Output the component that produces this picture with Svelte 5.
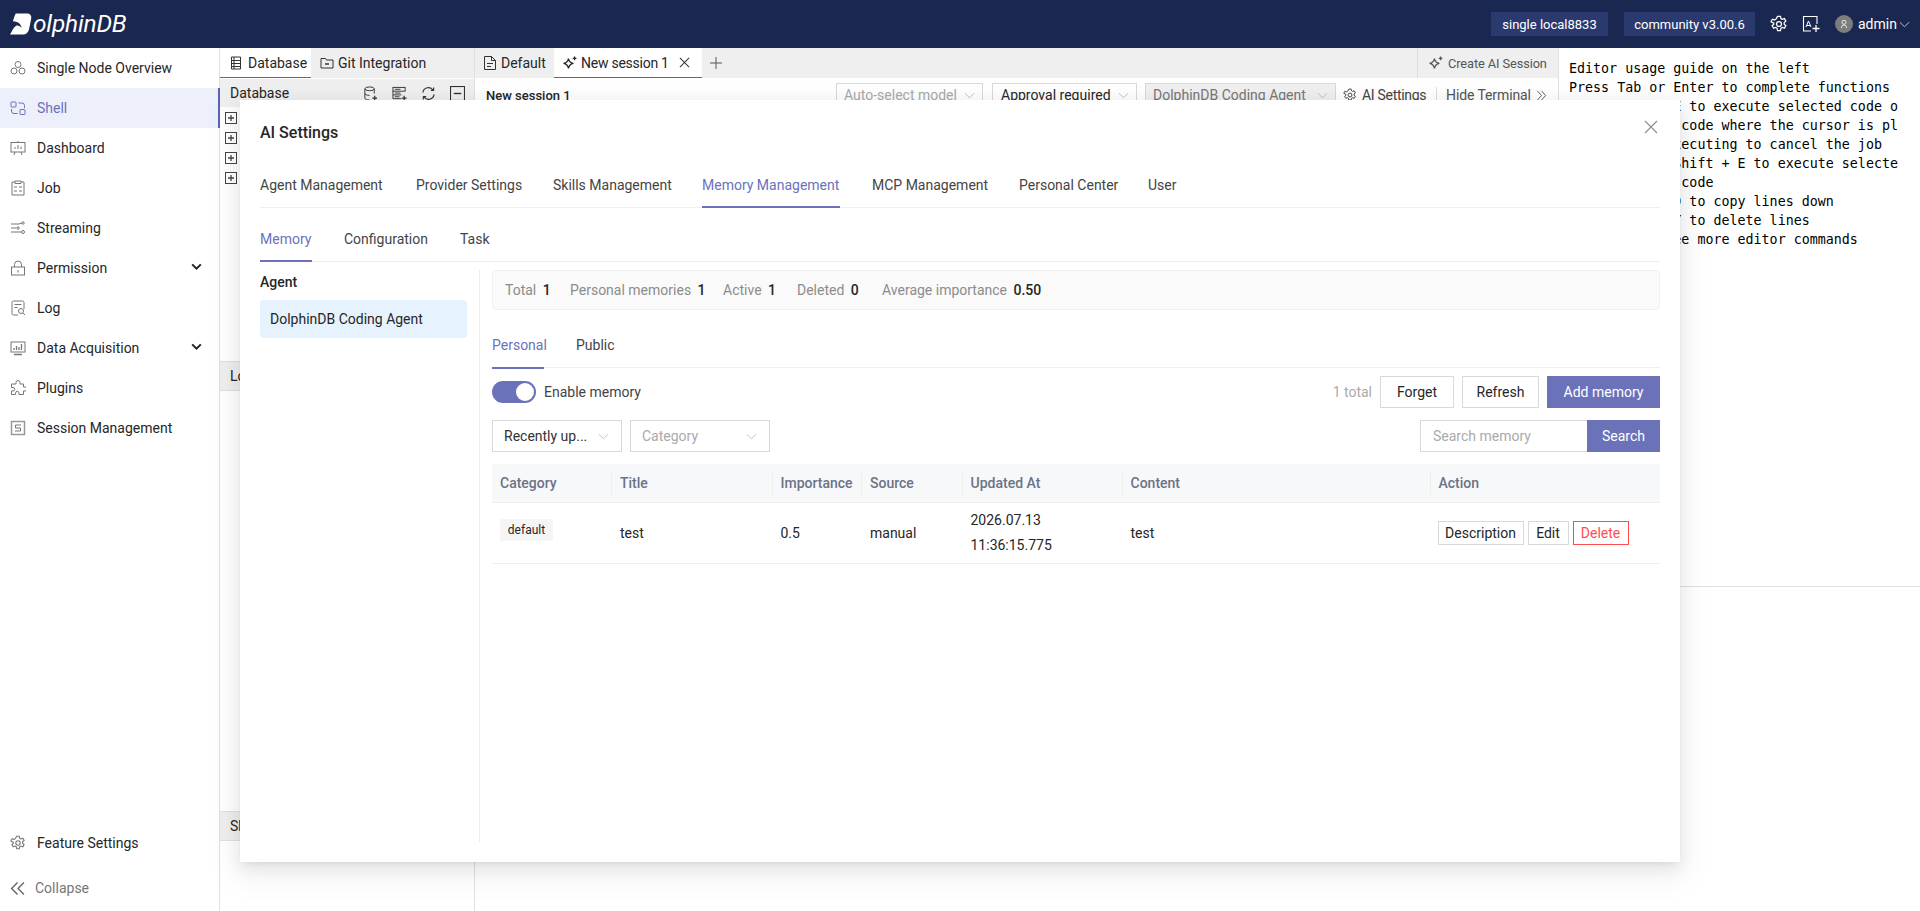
<script>
  const nav = [
    { t: 'Single Node Overview', i: 'overview' },
    { t: 'Shell', i: 'shell', active: true },
    { t: 'Dashboard', i: 'dash' },
    { t: 'Job', i: 'job' },
    { t: 'Streaming', i: 'stream' },
    { t: 'Permission', i: 'lock', caret: true },
    { t: 'Log', i: 'log' },
    { t: 'Data Acquisition', i: 'data', caret: true },
    { t: 'Plugins', i: 'plug' },
    { t: 'Session Management', i: 'sess' }
  ];
  const topTabs = [
    { t: 'Agent Management', w: 124 },
    { t: 'Provider Settings', w: 105 },
    { t: 'Skills Management', w: 117 },
    { t: 'Memory Management', w: 138 },
    { t: 'MCP Management', w: 115 },
    { t: 'Personal Center', w: 97 },
    { t: 'User', w: 28 }
  ];
  const subTabs = [
    { t: 'Memory', w: 52 },
    { t: 'Configuration', w: 84 },
    { t: 'Task', w: 26 }
  ];
  const scopeTabs = [
    { t: 'Personal', w: 52 },
    { t: 'Public', w: 37 }
  ];
  const stats = [
    { t: 'Total', v: '1', w: 65 },
    { t: 'Personal memories', v: '1', w: 153 },
    { t: 'Active', v: '1', w: 74 },
    { t: 'Deleted', v: '0', w: 85 },
    { t: 'Average importance', v: '0.50', w: 170 }
  ];
  const guide = [
    'Editor usage guide on the left',
    'Press Tab or Enter to complete functions',
    'Press Ctrl + E to execute selected code o',
    'r the line of code where the cursor is pl',
    'Press F2 if executing to cancel the job',
    'Press Ctrl + Shift + E to execute selecte',
    'd or the full code',
    'Press Ctrl + D to copy lines down',
    'Press Ctrl + Y to delete lines',
    'Press F1 to see more editor commands'
  ];
  const cols = ['Category', 'Title', 'Importance', 'Source', 'Updated At', 'Content', 'Action'];
</script>

{#snippet chev(cls)}
  <svg class={cls} viewBox="0 0 12 12"><path d="M1 3.500 6 8.500 11 3.500" fill="none" stroke="currentColor" stroke-width="1"/></svg>
{/snippet}

{#snippet gear(cls)}
  <svg class={cls} viewBox="0 0 16 16" fill="none" stroke="currentColor" stroke-width="1.100"><path d="M6.700 1.200h2.600l.4 2 1.200.7 1.900-.7 1.300 2.300-1.500 1.300v1.400l1.500 1.300-1.300 2.300-1.900-.7-1.200.7-.4 2H6.700l-.4-2-1.200-.7-1.900.7-1.300-2.300 1.500-1.300V7.300L.9 6l1.300-2.300 1.900.7 1.200-.7z"/><circle cx="8" cy="8" r="2.200"/></svg>
{/snippet}

{#snippet spark(cls)}
  <svg class={cls} viewBox="1.500 .5 11.500 11.500" fill="none" stroke="currentColor" stroke-width="1.100"><path d="M6 2.600c.5 2.500 1.400 3.500 4 4-2.600.6-3.500 1.500-4 4-.5-2.500-1.400-3.400-4-4 2.600-.5 3.500-1.500 4-4z"/><path d="M11 1v3M9.500 2.500h3" stroke-width="1.100"/></svg>
{/snippet}

{#snippet navIcon(n)}
  <svg class="nav-ico" viewBox="0 0 16 16" fill="none" stroke="currentColor" stroke-width="1">
    {#if n === 'overview'}
      <circle cx="8" cy="4.500" r="3"/><circle cx="4" cy="11" r="3"/><circle cx="12" cy="11" r="3"/>
    {:else if n === 'shell'}
      <rect x="1" y="2" width="5" height="5" rx=".5"/><rect x="10" y="9.500" width="5" height="5" rx=".5"/><path d="M8.500 3h3.500a2.500 2.500 0 0 1 2.500 2.500V8M7.500 13.500H4A2.500 2.500 0 0 1 1.500 11V9"/>
    {:else if n === 'dash'}
      <rect x="1" y="2.500" width="14" height="9.500"/><path d="M8 1v1.500M5 9V7M8 9V5M11 9V6.500M5 12l-1 3M11 12l1 3"/>
    {:else if n === 'job'}
      <path d="M5 2H2v13h12V2h-3M5 1h6v2.500H5zM4 7h3M4 11h3M9 7h3M9 11h3"/>
    {:else if n === 'stream'}
      <path d="M1 4h8M1 8h5M1 12h10M9 4l3-1"/><circle cx="13" cy="3" r="1.200"/><circle cx="8" cy="8" r="1.200"/><circle cx="13" cy="12" r="1.500"/>
    {:else if n === 'lock'}
      <rect x="1.500" y="7" width="13" height="8"/><path d="M4.500 7V4.500a3.500 3.500 0 0 1 7 0V7M8 10v2.500"/>
    {:else if n === 'log'}
      <path d="M14 9V2.500A1.500 1.500 0 0 0 12.500 1h-9A1.500 1.500 0 0 0 2 2.500v11A1.500 1.500 0 0 0 3.500 15H8M4.500 4.500h7M4.500 7.500h3"/><circle cx="11" cy="11" r="2.500"/><path d="M13 13l2 2"/>
    {:else if n === 'data'}
      <rect x="1" y="2" width="14" height="10"/><path d="M4 10V8M6.500 10V6M9 10V7M11.500 10V4M4 14.500h8" stroke-width="1.300"/>
    {:else if n === 'plug'}
      <path d="M6 2.500a2 2 0 0 1 4 0V4h3.500v3H15a2 2 0 0 1 0 4h-1.500v3.500H9V13a1.700 1.700 0 0 0-3.400 0v1.500H1.500V11H3a1.700 1.700 0 0 0 0-3.500H1.500V4H6z"/>
    {:else if n === 'sess'}
      <rect x="1.500" y="1.500" width="13" height="13" stroke="#999" stroke-width="1.500"/><path d="M11 5H5.500v3h5v3H5"/>
    {/if}
  </svg>
{/snippet}

{#snippet tree()}
  <svg class="tree" viewBox="0 0 12 12" fill="none" stroke="#444"><rect x=".5" y=".5" width="11" height="11"/><path d="M3 6h6M6 3v6" stroke-width="1.300"/></svg>
{/snippet}

<div class="app">
  <header class="top">
    <div class="logo">
      <svg class="logo-d" viewBox="0 0 24 24"><path d="M6 1h11c4 0 6 2 5 6l-2 10c-1 4-3 6-7 6H0c2-3 3-7 6-9 2-1 4 0 6 2 0-3-3-7-9-7 1-3 2-6 3-8z" fill="#fff"/></svg>
      <span class="logo-t">olphinDB</span>
    </div>
    <div class="top-right">
      <span class="chip c1">single local8833</span>
      <span class="chip c2">community v3.00.6</span>
      {@render gear('top-gear')}
      <svg class="top-ai" viewBox="0 0 18 18" fill="none" stroke="#fff" stroke-width="1.100"><path d="M9 16H1.500V1.500H15V9"/><path d="M4 12l2.500-6L9 12M5 10.500h3" stroke-width="1"/><path d="M10.500 13.500h7M14 10v7" stroke-width="1.300"/></svg>
      <span class="avatar">
        <svg viewBox="0 0 10 10" fill="none" stroke="#fff" stroke-width=".8"><circle cx="5" cy="3.300" r="2"/><path d="M2.500 9c0-2 1-3 2.500-3s2.500 1 2.500 3"/></svg>
      </span>
      <span class="uname">admin</span>
      {@render chev('uchev')}
    </div>
  </header>

  <div class="body">
    <aside class="side">
      <nav class="nav">
        {#each nav as n}
          <div class="nav-item" class:active={n.active}>
            {@render navIcon(n.i)}
            <span>{n.t}</span>
            {#if n.caret}
              <svg class="caret" viewBox="0 0 12 12"><path d="M2 4l4 4 4-4" fill="none" stroke="#222" stroke-width="1.800"/></svg>
            {/if}
          </div>
        {/each}
      </nav>
      <div class="side-foot">
        <div class="nav-item">
          {@render gear('nav-ico')}
          <span>Feature Settings</span>
        </div>
        <div class="collapse">
          <svg viewBox="0 0 14 14" fill="none" stroke="#666" stroke-width="1.300"><path d="M7 1.500 1.500 7 7 12.500M13 1.500 7.500 7 13 12.500"/></svg>
          <span>Collapse</span>
        </div>
      </div>
    </aside>

    <section class="dbcol">
      <div class="tabs-bar">
        <div class="dtab on">
          <svg viewBox="0 0 14 14" fill="none" stroke="#333"><path d="M2.500 1h9v12h-9zM2.500 4.500h9M2.500 7.500h9M2.500 10.500h9M5 1v12"/></svg>
          Database
        </div>
        <div class="dtab">
          <svg viewBox="0 0 14 14" fill="none" stroke="#333"><path d="M1 2.500h4.500l1 1.500H13v8H1z"/><path d="M5 8h4" stroke-width="1.500"/></svg>
          Git Integration
        </div>
      </div>
      <div class="db-head">
        <span>Database</span>
        <div class="db-tools">
          <svg viewBox="0 0 16 16" fill="none" stroke="#333"><ellipse cx="7" cy="3" rx="5" ry="2"/><path d="M2 3v10c0 1 2 2 5 2M12 3v5M2 8c0 1 2 2 5 2"/><path d="M10 13h5M12.500 10.500v5" stroke-width="1.300"/></svg>
          <svg viewBox="0 0 16 16" fill="none" stroke="#333"><rect x="1" y="1.500" width="13" height="4"/><path d="M1 5.500v4h9M1 9.500v4h9M3 3.500h6M3 7.500h6M3 11.500h5"/><path d="M10.500 13h5M13 10.500v5" stroke-width="1.300"/></svg>
          <svg viewBox="0 0 16 16" fill="none" stroke="#333" stroke-width="1.200"><path d="M2 7a6 6 0 0 1 11-2.500M14 9a6 6 0 0 1-11 2.500"/><path d="M13.500 1.500v3.200h-3M2.500 14.500v-3.200h3"/></svg>
          <svg viewBox="0 0 14 14" fill="none" stroke="#333"><rect x=".5" y=".5" width="13" height="13"/><path d="M3.500 7h7" stroke-width="1.300"/></svg>
        </div>
      </div>
      <div class="db-tree">
        {#each [0, 1, 2, 3] as k}<div class="tree-row">{@render tree()}</div>{/each}
      </div>
      <div class="pane-title">Local</div>
      <div class="pane-fill"></div>
      <div class="pane-title">Shared</div>
      <div class="pane-end"></div>
    </section>

    <section class="editor">
      <div class="ed-tabs">
        <div class="etab def">
          <svg viewBox="0 0 12 14" fill="none" stroke="#333"><path d="M.5.500h7l4 4v9H.500zM7.500.5v4h4M3 7.500h6M3 10.500h4"/></svg>
          Default
        </div>
        <div class="etab on">
          {@render spark('sp')}
          <span class="etab-t">New session 1</span>
          <svg class="ex" viewBox="0 0 12 12" fill="none" stroke="#333" stroke-width="1.100"><path d="M1 1l10 10M11 1 1 11"/></svg>
        </div>
        <svg class="plus" viewBox="0 0 12 12" fill="none" stroke="#555"><path d="M0 6h12M6 0v12"/></svg>
        <div class="create">
          {@render spark('sp')}
          Create AI Session
        </div>
      </div>
      <div class="ed-tools">
        <strong class="sess-name">New session 1</strong>
        <div class="ed-right">
          <span class="sel dim">Auto-select model{@render chev('schev')}</span>
          <span class="sel appr">Approval required{@render chev('schev')}</span>
          <span class="sel gray">DolphinDB Coding Agent{@render chev('schev')}</span>
          <span class="ai-set">{@render gear('agear')}AI Settings</span>
          <span class="hide-t">Hide Terminal
            <svg viewBox="0 0 12 12" fill="none" stroke="#555"><path d="M1.500 1 6 6l-4.500 5M6 1l4.500 5L6 11"/></svg>
          </span>
        </div>
      </div>
    </section>

    <section class="guide">
      <pre>{guide.join('\n')}</pre>
    </section>
  </div>

  <div class="modal">
    <div class="m-head">
      <h2>AI Settings</h2>
      <svg class="m-close" viewBox="0 0 14 14" fill="none" stroke="#8c8c8c" stroke-width="1.100"><path d="M1 1l12 12M13 1 1 13"/></svg>
    </div>
    <div class="tabs main-tabs">
      {#each topTabs as t}
        <div class="tab" class:on={t.t === 'Memory Management'} style="width: {t.w}px">{t.t}</div>
      {/each}
    </div>
    <div class="tabs sub-tabs">
      {#each subTabs as t}
        <div class="tab" class:on={t.t === 'Memory'} style="width: {t.w}px">{t.t}</div>
      {/each}
    </div>
    <div class="m-body">
      <div class="agents">
        <div class="ag-title">Agent</div>
        <div class="ag-item">DolphinDB Coding Agent</div>
      </div>
      <div class="mem">
        <div class="stats">
          {#each stats as s}
            <span class="stat" style="width: {s.w}px">{s.t} <b>{s.v}</b></span>
          {/each}
        </div>
        <div class="tabs scope">
          {#each scopeTabs as t}
            <div class="tab" class:on={t.t === 'Personal'} style="width: {t.w}px">{t.t}</div>
          {/each}
        </div>
        <div class="row r1">
          <div class="switch-wrap">
            <span class="switch"><i></i></span>
            <span class="sw-l">Enable memory</span>
          </div>
          <div class="r-right">
            <span class="tot">1 total</span>
            <button class="btn b-f">Forget</button>
            <button class="btn b-r">Refresh</button>
            <button class="btn prim b-a">Add memory</button>
          </div>
        </div>
        <div class="row r2">
          <div class="filters">
            <span class="fsel w1">Recently up...{@render chev('fchev')}</span>
            <span class="fsel w2 ph">Category{@render chev('fchev')}</span>
          </div>
          <div class="search">
            <span class="s-in">Search memory</span>
            <button class="btn prim s-b">Search</button>
          </div>
        </div>
        <div class="tbl">
          <div class="tr th">
            {#each cols as c}<div class="td"><span>{c}</span></div>{/each}
          </div>
          <div class="tr rowd">
            <div class="td"><span class="tag">default</span></div>
            <div class="td">test</div>
            <div class="td">0.5</div>
            <div class="td">manual</div>
            <div class="td date">2026.07.13<br />11:36:15.775</div>
            <div class="td">test</div>
            <div class="td act">
              <button class="mini m1">Description</button>
              <button class="mini m2">Edit</button>
              <button class="mini m3 del">Delete</button>
            </div>
          </div>
        </div>
      </div>
    </div>
  </div>
</div>

<style>
  :global(body) { margin: 0; background: #fff; }
  * { box-sizing: border-box; }
  .app { width: 1920px; height: 911px; overflow: hidden; position: relative; font-family: Roboto, "Liberation Sans", sans-serif; font-size: 14px; color: #262626; }
  svg { display: block; flex: none; }

  .top { height: 48px; background: #1a2750; display: flex; align-items: center; justify-content: space-between; color: #fff; }
  .logo { display: flex; align-items: center; padding-left: 10px; }
  .logo-d { width: 23px; height: 24px; }
  .logo-t { font: italic 400 24.500px/1 Roboto, sans-serif; letter-spacing: -.2px; }
  .top-right { display: flex; align-items: center; padding-right: 10px; }
  .chip { height: 24px; background: #2b3a6e; display: flex; align-items: center; justify-content: center; font-size: 13px; }
  .c1 { width: 117px; margin-right: 16px; }
  .c2 { width: 131px; margin-right: 15px; }
  .top-gear { width: 18px; height: 18px; margin-right: 14px; color: #fff; }
  .top-ai { width: 18px; height: 18px; margin-right: 15px; }
  .avatar { width: 18px; height: 18px; border-radius: 50%; background: #7d7d7d; display: flex; align-items: center; justify-content: center; margin-right: 5px; }
  .avatar svg { width: 10px; height: 10px; }
  .uname { font-size: 14px; width: 38px; }
  .uchev { width: 11px; height: 11px; margin-left: 3px; color: #ccd; }

  .body { display: flex; height: 863px; }
  .side { width: 220px; flex: none; border-right: 1px solid #e0e0e0; display: flex; flex-direction: column; justify-content: space-between; }
  .nav-item { height: 40px; display: flex; align-items: center; padding-left: 10px; gap: 11px; color: #262626; position: relative; }
  .nav-ico { width: 16px; height: 16px; color: #777; }
  .nav-item.active { background: #edf0fb; color: #6b72ba; border-right: 2px solid #5a62b8; margin-right: -1px; }
  .nav-item.active .nav-ico { color: #6b72ba; }
  .caret { position: absolute; right: 16px; top: 12px; width: 13px; height: 13px; }
  .collapse { height: 48px; display: flex; align-items: center; padding: 2px 0 0 10px; gap: 10px; color: #777; }
  .collapse svg { width: 15px; height: 15px; }

  .dbcol { width: 255px; flex: none; border-right: 1px solid #e0e0e0; display: flex; flex-direction: column; }
  .tabs-bar { height: 30px; background: #efefef; display: flex; flex: none; }
  .dtab { display: flex; align-items: center; gap: 4px; padding: 0 8px 0 9px; height: 30px; }
  .dtab svg { width: 14px; height: 14px; }
  .dtab.on { background: #fff; border-bottom: 1px solid #5a62b8; width: 91px; padding-left: 9px; gap: 5px; }
  .db-head { height: 28px; margin-top: 1px; background: #efefef; display: flex; align-items: center; justify-content: space-between; padding: 0 9px 0 10px; flex: none; }
  .db-tools { display: flex; gap: 14px; align-items: center; }
  .db-tools svg { width: 15px; height: 15px; }
  .db-tree { height: 254px; flex: none; padding: 1px 0 0 5px; }
  .tree-row { height: 20px; display: flex; align-items: center; }
  .tree { width: 12px; height: 12px; }
  .pane-title { height: 30px; background: #efefef; padding-left: 10px; line-height: 28px; flex: none; border-top: 1px solid #e0e0e0; border-bottom: 1px solid #e0e0e0; }
  .pane-fill { height: 420px; flex: none; }
  .pane-end { flex: 1; }

  .editor { width: 1083px; flex: none; display: flex; flex-direction: column; }
  .ed-tabs { height: 30px; background: #efefef; display: flex; align-items: center; flex: none; }
  .etab { height: 30px; display: flex; align-items: center; flex: none; }
  .etab.def { width: 79px; padding-left: 9px; gap: 5px; }
  .etab.def svg { width: 12px; height: 14px; }
  .etab.on { background: #fff; border-bottom: 1px solid #5a62b8; width: 148px; padding: 0 12px 0 9px; gap: 4px; }
  .etab-t { letter-spacing: -.25px; white-space: nowrap; }
  .etab .sp { width: 14px; height: 14px; }
  .ex { width: 11px; height: 11px; margin-left: auto; }
  .plus { width: 12px; height: 12px; margin-left: 8px; }
  .create { margin-left: auto; width: 141px; height: 30px; border-left: 1px solid #ddd; display: flex; align-items: center; gap: 5px; padding-left: 11px; color: #555; font-size: 12.800px; letter-spacing: -.1px; white-space: nowrap; }
  .create .sp { width: 14px; height: 14px; }
  .ed-tools { display: flex; justify-content: space-between; align-items: center; padding: 5px 11px 0 11px; }
  .sess-name { font-weight: 500; font-size: 13px; }
  .ed-right { display: flex; align-items: center; }
  .sel { height: 24px; border: 1px solid #d9d9d9; display: flex; align-items: center; justify-content: space-between; padding: 0 7px; white-space: nowrap; width: 147px; }
  .sel.dim { color: #aaa; }
  .sel.appr { width: 145px; margin-left: 9px; padding-left: 8px; }
  .sel.gray { background: #f0f0f0; color: #777; margin-left: 8px; width: 191px; }
  .schev { width: 11px; height: 11px; color: #bbb; }
  .ai-set { width: 94px; display: flex; align-items: center; gap: 5px; margin-left: 7px; border-right: 1px solid #ddd; color: #444; white-space: nowrap; letter-spacing: -.3px; }
  .agear { width: 14px; height: 14px; }
  .hide-t { width: 110px; display: flex; align-items: center; justify-content: space-between; color: #555; padding-left: 9px; white-space: nowrap; letter-spacing: -.1px; }
  .hide-t svg { width: 11px; height: 11px; }

  .guide { flex: 1; border-left: 1px solid #e0e0e0; padding: 11px 0 0 10px; overflow: hidden; height: 539px; border-bottom: 1px solid #e0e0e0; }
  .guide pre { margin: 0; font: 13.330px/19px "DejaVu Sans Mono", monospace; color: #000; white-space: pre; }

  .modal { position: absolute; left: 240px; top: 100px; width: 1440px; height: 762px; background: #fff; padding: 0 20px;
    box-shadow: 0 6px 16px 0 rgba(0,0,0,.08), 0 3px 6px -4px rgba(0,0,0,.12), 0 9px 28px 8px rgba(0,0,0,.05); display: flex; flex-direction: column; }
  .m-head { height: 56px; display: flex; align-items: center; justify-content: space-between; flex: none; padding-top: 8px; }
  h2 { margin: 0; font-size: 16px; font-weight: 500; color: #262626; }
  .m-close { width: 14px; height: 14px; margin-right: 2px; margin-top: -10px; }
  .tabs { display: flex; border-bottom: 1px solid #eee; flex: none; }
  .tab { color: #444; line-height: 20px; position: relative; white-space: nowrap; flex: none; }
  .tab.on { color: #6b72ba; }
  .tab.on::after { content: ""; position: absolute; left: 0; right: 0; bottom: -1px; height: 2px; background: #6b72ba; }
  .main-tabs { gap: 32px; height: 52px; padding-top: 19px; }
  .main-tabs .tab { height: 32px; }
  .sub-tabs { gap: 32px; height: 54px; padding-top: 21px; }
  .sub-tabs .tab { height: 32px; }
  .m-body { flex: 1; display: flex; min-height: 0; }
  .agents { width: 220px; flex: none; border-right: 1px solid #eee; margin: 8px 0 20px; padding-top: 2px; padding-right: 12px; }
  .ag-title { font-weight: 500; line-height: 20px; }
  .ag-item { margin-top: 8px; height: 38px; background: #e6f2fd; display: flex; align-items: center; padding-left: 10px; border-radius: 4px; }
  .mem { flex: 1; padding: 8px 0 0 12px; min-width: 0; }
  .stats { height: 40px; background: #fafafa; border: 1px solid #f0f0f0; display: flex; align-items: center; padding: 0 12px; color: #8c8c8c; border-radius: 4px; }
  .stat { flex: none; white-space: nowrap; }
  .stats b { color: #262626; font-weight: 500; margin-left: 3px; }
  .scope { gap: 32px; height: 58px; padding-top: 25px; }
  .scope .tab { height: 33px; }
  .row { display: flex; justify-content: space-between; align-items: center; }
  .r1 { height: 32px; margin-top: 8px; }
  .switch-wrap { display: flex; align-items: center; gap: 8px; }
  .switch { width: 44px; height: 22px; border-radius: 11px; background: #6b72ba; position: relative; display: block; }
  .switch i { position: absolute; right: 2px; top: 2px; width: 18px; height: 18px; border-radius: 50%; background: #fff; }
  .sw-l { color: #444; }
  .r-right { display: flex; align-items: center; gap: 8px; }
  .tot { color: #aaa; }
  .btn { height: 32px; padding: 0; border: 1px solid #d9d9d9; background: #fff; font: inherit; color: #262626; }
  .b-f { width: 74px; }
  .b-r { width: 77px; }
  .b-a { width: 113px; }
  .btn.prim { background: #6b72ba; border-color: #6b72ba; color: #fff; }
  .r2 { height: 32px; margin-top: 12px; }
  .filters { display: flex; gap: 8px; }
  .fsel { height: 32px; border: 1px solid #d9d9d9; display: flex; align-items: center; justify-content: space-between; padding: 0 12px 0 11px; color: #333; }
  .fsel.ph { color: #aaa; }
  .w1 { width: 130px; } .w2 { width: 140px; }
  .fchev { width: 11px; height: 11px; color: #bbb; }
  .search { display: flex; }
  .s-in { width: 167px; height: 32px; border: 1px solid #d9d9d9; border-right: 0; display: flex; align-items: center; padding-left: 12px; color: #aaa; }
  .s-b { width: 73px; }
  .tbl { margin-top: 12px; }
  .tr { display: grid; grid-template-columns: 119px 160.500px 89.500px 100.500px 160px 308px 1fr; }
  .th { height: 39px; background: #f7f8fa; border-bottom: 1px solid #eee; align-items: center; color: #6b7386; font-weight: 500; }
  .th .td { height: 23px; display: flex; align-items: center; border-left: 1px solid #eee; padding-left: 8px; }
  .th .td:first-child { border-left: 0; }
  .rowd { height: 61px; border-bottom: 1px solid #eee; align-items: center; }
  .rowd .td { padding-left: 9px; }
  .rowd .td:first-child { padding-left: 8px; }
  .rowd .date { line-height: 25px; }
  .tag { background: #f5f5f5; display: inline-block; height: 22px; line-height: 22px; width: 53px; text-align: center; font-size: 12px; position: relative; top: -3px; }
  .rowd .act { display: flex; gap: 4px; padding-left: 8px; }
  .mini { height: 24px; padding: 0; border: 1px solid #d9d9d9; background: #fff; font: inherit; color: #262626; }
  .m1 { width: 86px; } .m2 { width: 41px; } .m3 { width: 56px; }
  .mini.del { color: #ff4d4f; border-color: #ff4d4f; }
</style>
